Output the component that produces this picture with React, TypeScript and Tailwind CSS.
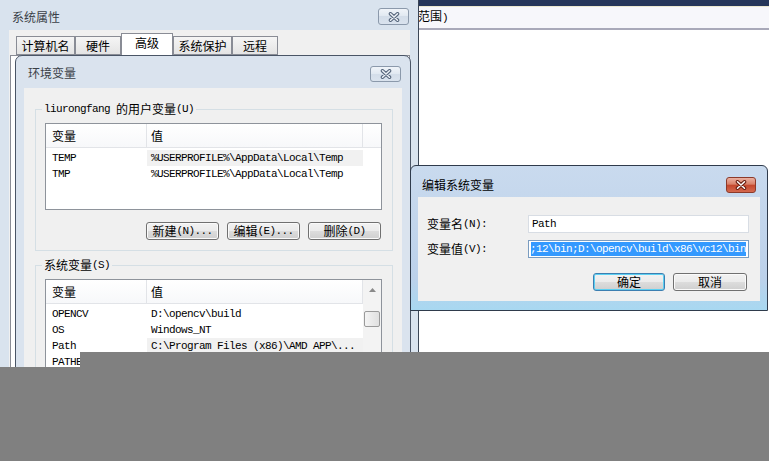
import type { ReactNode } from 'react';

const MONO = "font-['Liberation_Mono','DejaVu_Sans_Mono',monospace] text-[11px] tracking-[-0.6px]";

type Row = { name: string; value: string; hot?: boolean };

const userRows: Row[] = [
  { name: 'TEMP', value: '%USERPROFILE%\\AppData\\Local\\Temp', hot: true },
  { name: 'TMP', value: '%USERPROFILE%\\AppData\\Local\\Temp' },
];

const systemRows: Row[] = [
  { name: 'OPENCV', value: 'D:\\opencv\\build' },
  { name: 'OS', value: 'Windows_NT' },
  { name: 'Path', value: 'C:\\Program Files (x86)\\AMD APP\\...', hot: true },
  { name: 'PATHEXT', value: '.COM;.EXE;.BAT;.CMD;.VBS;.VBE;...' },
];

function M({ children }: { children: ReactNode }) {
  return <span className={MONO}>{children}</span>;
}

function CloseGlyph({ active }: { active?: boolean }) {
  const d = 'M2.5 1.8 L9.5 8.2 M9.5 1.8 L2.5 8.2';
  return (
    <svg width="12" height="10" viewBox="0 0 12 10">
      <path d={d} stroke={active ? '#6b1f12' : '#56667c'} strokeWidth="3.6" strokeLinecap="round" />
      <path d={d} stroke={active ? '#ffffff' : '#eef2f7'} strokeWidth="1.5" strokeLinecap="round" />
    </svg>
  );
}

function CloseButton({ active, className }: { active?: boolean; className: string }) {
  return (
    <div
      className={`flex shrink-0 items-center justify-center rounded-[3px] border ${
        active
          ? 'border-[#8c3a2a] bg-[linear-gradient(#eab0a1,#d98068_45%,#c4462c_50%,#d4694f)]'
          : 'border-[#8b99ab] bg-[linear-gradient(#f0f4f9,#e0e8f1_50%,#d3dde9_50%,#dae3ee)]'
      } ${className}`}
    >
      <CloseGlyph active={active} />
    </div>
  );
}

function Button({ children, className, primary }: { children: ReactNode; className: string; primary?: boolean }) {
  return (
    <div
      className={`flex h-[18px] items-center justify-center rounded-[3px] border bg-[linear-gradient(#f2f2f2,#ebebeb_50%,#dddddd_50%,#cfcfcf)] ${
        primary ? 'border-[#3c7fb1] shadow-[inset_0_0_0_1px_#5cd0f2]' : 'border-[#707070] shadow-[inset_0_0_0_1px_#fafafa]'
      } ${className}`}
    >
      {children}
    </div>
  );
}

function ScrollBar() {
  return (
    <div className="flex w-[18px] shrink-0 flex-col bg-[#f3f3f3]">
      <div className="flex h-[20px] items-center justify-center">
        <svg width="7" height="4" viewBox="0 0 7 4">
          <polygon points="3.5,0 7,4 0,4" fill="#8a8a8a" />
        </svg>
      </div>
      <div className="mx-px mt-[11px] h-[16px] rounded-[2px] border border-[#9a9a9a] bg-[linear-gradient(90deg,#f4f4f4,#e0e0e0)]" />
    </div>
  );
}

function ListView({ rows, className, scroll }: { rows: Row[]; className: string; scroll?: boolean }) {
  return (
    <div className={`flex overflow-hidden border border-[#8e939b] bg-white ${className}`}>
      <div className="flex min-w-0 flex-1 flex-col">
        <div className="flex h-[24px] shrink-0 border-b border-[#e2e4e8] bg-[linear-gradient(#ffffff,#f7f8fa)]">
          <div className="flex w-[101px] items-center border-r border-[#e2e4e8] pl-[6px]">变量</div>
          <div className="flex w-[216px] items-center border-r border-[#e2e4e8] pl-[4px]">值</div>
          {!scroll && <div className="flex-1" />}
        </div>
        <div className="flex flex-col pt-[2px]">
          {rows.map((r) => (
            <div key={r.name} className={`flex h-[16px] items-center whitespace-nowrap ${MONO}`}>
              <div className="w-[101px] pl-[6px]">{r.name}</div>
              <div className={`flex h-full w-[216px] items-center pl-[4px] ${r.hot ? 'bg-[#f1f1f1]' : ''}`}>{r.value}</div>
            </div>
          ))}
        </div>
      </div>
      {scroll && <ScrollBar />}
    </div>
  );
}

function Tab({ children, className, selected }: { children: ReactNode; className: string; selected?: boolean }) {
  return (
    <div
      className={`flex shrink-0 items-center justify-center border border-[#898c95] ${
        selected ? 'z-10 h-[22px] border-b-0 bg-white pb-[3px]' : 'h-[19px] bg-[linear-gradient(#f5f5f5,#e4e4e4)]'
      } ${className}`}
    >
      {children}
    </div>
  );
}

function Label({ children }: { children: ReactNode }) {
  return <div className="flex h-[16px] items-center whitespace-nowrap">{children}</div>;
}

function BackWindow() {
  return (
    <div className="absolute right-0 top-0 flex h-[352px] w-[350px] flex-col bg-white">
      <div className="h-[6px] bg-[#26365a]" />
      <div className="flex h-[24px] items-center border-t border-b-2 border-t-[#ece8d0] border-b-[#a9a9b9] bg-[#f7f7fb] pb-[2px]">
        <span className="-ml-[1px]">
          范围<M>)</M>
        </span>
      </div>
      <div className="flex-1 bg-white" />
    </div>
  );
}

function SystemProperties() {
  return (
    <div className="absolute left-0 top-0 flex h-[461px] w-[419px] flex-col border-r border-[#3b4656] bg-[#d9e3ee]">
      <div className="flex h-[30px] shrink-0 items-start justify-between pl-[12px] pr-[9px] pt-[8px]">
        <span className="mt-px text-[#3a3f47]">系统属性</span>
        <CloseButton className="h-[17px] w-[31px]" />
      </div>
      <div className="ml-[9px] mr-[8px] flex flex-1 flex-col bg-[#f0f0f0]">
        <div className="flex h-[25px] shrink-0 items-end pl-[7px]">
          <Tab className="w-[59px]">计算机名</Tab>
          <Tab className="w-[46px]">硬件</Tab>
          <Tab className="w-[52px]" selected>
            高级
          </Tab>
          <Tab className="w-[59px]">系统保护</Tab>
          <Tab className="w-[46px]">远程</Tab>
        </div>
        <div className="ml-px flex-1 border border-[#898c95] bg-white" />
      </div>
    </div>
  );
}

function EnvironmentDialog() {
  return (
    <div className="absolute left-[15px] top-[55px] flex h-[420px] w-[396px] flex-col rounded-t-[7px] border border-[#4a5566] bg-[#dae3ee]">
      <div className="flex h-[32px] shrink-0 items-start justify-between pl-[12px] pr-[9px] pt-[10px]">
        <span className="-mt-px text-[#3a3f47]">环境变量</span>
        <CloseButton className="h-[16px] w-[31px]" />
      </div>
      <div className="mx-[8px] flex flex-1 flex-col bg-[#f0f0f0]">
        <fieldset className="ml-[11px] mr-[9px] mt-[13px] border border-[#d5dfe5] pb-[10px]">
          <legend className="ml-[6px] flex h-[16px] items-center px-[2px]">
            <M>liurongfang&nbsp;</M>的用户变量<M>(U)</M>
          </legend>
          <ListView rows={userRows} className="ml-[9px] mt-[6px] h-[87px] w-[337px]" />
          <div className="mt-[12px] flex justify-end gap-[8px] pr-[11px]">
            <Button className="w-[73px]">
              新建<M>(N)...</M>
            </Button>
            <Button className="w-[73px]">
              编辑<M>(E)...</M>
            </Button>
            <Button className="w-[73px]">
              删除<M>(D)</M>
            </Button>
          </div>
        </fieldset>
        <fieldset className="ml-[11px] mr-[9px] mt-[6px] border border-[#d5dfe5] pb-[10px]">
          <legend className="ml-[6px] flex h-[16px] items-center px-[2px]">
            系统变量<M>(S)</M>
          </legend>
          <ListView rows={systemRows} className="ml-[9px] mt-[6px] h-[110px] w-[337px]" scroll />
        </fieldset>
      </div>
    </div>
  );
}

function TextBox({ children, selected }: { children: ReactNode; selected?: boolean }) {
  return (
    <div
      className={`flex h-[18px] w-[221px] items-center overflow-hidden border bg-white ${
        selected ? 'justify-end border-[#7a9cc0] px-[2px]' : 'border-[#d8dde4] pl-[3px]'
      }`}
    >
      {selected ? (
        <span className={`flex h-[14px] w-full items-center justify-end overflow-hidden whitespace-nowrap bg-[#3399ff] text-white ${MONO}`}>
          {children}
        </span>
      ) : (
        <span className={`whitespace-nowrap ${MONO}`}>{children}</span>
      )}
    </div>
  );
}

function EditDialog() {
  return (
    <div className="absolute left-[410px] top-[165px] flex h-[146px] w-[358px] flex-col rounded-t-[6px] border border-[#2f3b4c] bg-[linear-gradient(#c9daee,#bcd1ea_78%,#a8d8f1)]">
      <div className="flex h-[31px] shrink-0 items-start justify-between pl-[11px] pr-[11px] pt-[11px]">
        <span>编辑系统变量</span>
        <CloseButton active className="h-[16px] w-[30px]" />
      </div>
      <div className="mx-[7px] flex h-[104px] flex-col bg-[#f0f0f0] pl-[9px] pr-[11px] pt-[18px]">
        <div className="flex h-[18px] items-center">
          <div className="w-[101px]">
            <Label>
              变量名<M>(N):</M>
            </Label>
          </div>
          <TextBox>Path</TextBox>
        </div>
        <div className="mt-[7px] flex h-[18px] items-center">
          <div className="w-[101px]">
            <Label>
              变量值<M>(V):</M>
            </Label>
          </div>
          <TextBox selected>;12\bin;D:\opencv\build\x86\vc12\bin</TextBox>
        </div>
        <div className="mt-[15px] flex justify-end gap-[8px] pr-[2px]">
          <Button className="w-[72px]" primary>
            确定
          </Button>
          <Button className="w-[74px]">取消</Button>
        </div>
      </div>
    </div>
  );
}

export default function App() {
  return (
    <div className="relative h-[461px] w-[769px] overflow-hidden bg-white font-['Noto_Sans_CJK_SC','Noto_Sans',sans-serif] text-[12px] leading-[16px] text-black">
      <BackWindow />
      <SystemProperties />
      <EnvironmentDialog />
      <EditDialog />
      <div className="absolute left-[80px] right-0 top-[352px] h-[15px] bg-[#808080]" />
      <div className="absolute bottom-0 left-0 right-0 top-[367px] bg-[#808080]" />
    </div>
  );
}
